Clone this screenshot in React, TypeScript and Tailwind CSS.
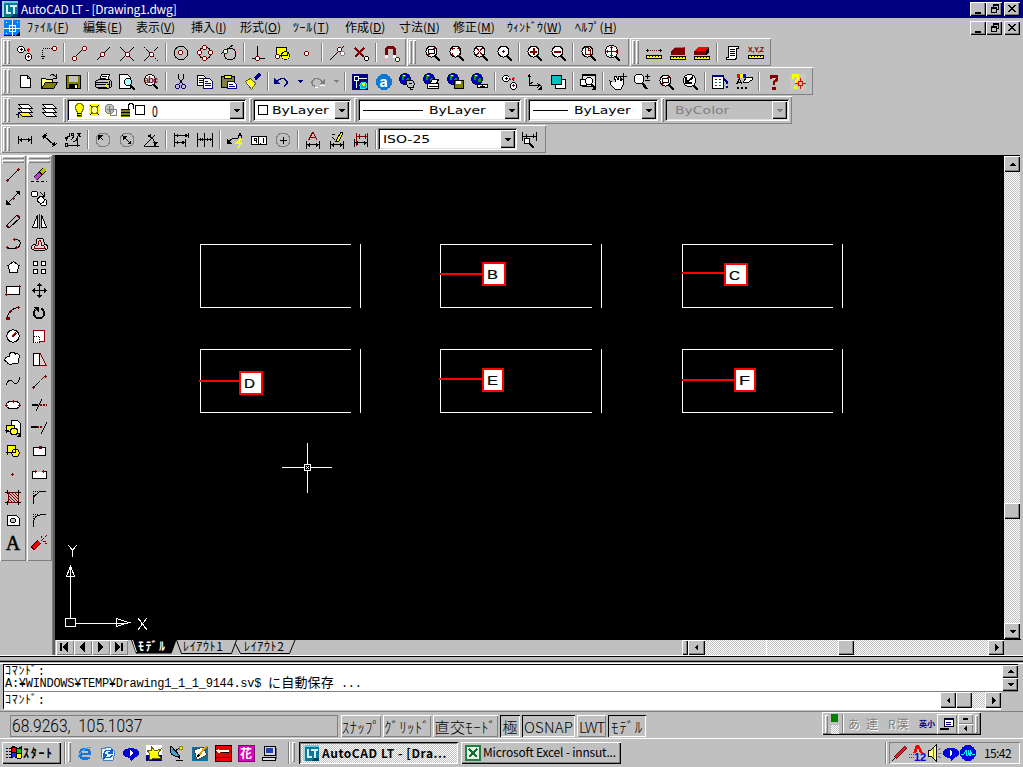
import type { ReactNode } from 'react';

const RED = '#800000';
const NAVY = '#000080';
const WHITE = '#fff';
const GRAY = '#808080';
const YELLOW = '#ffff00';

// --- Win95 style bevels ---
const raised = 'bg-[#c0c0c0] shadow-[inset_1px_1px_0_#fff,inset_-1px_-1px_0_#000,inset_-2px_-2px_0_#808080]';
const thinRaised = 'bg-[#c0c0c0] shadow-[inset_1px_1px_0_#fff,inset_-1px_-1px_0_#808080]';
const thinSunken = 'shadow-[inset_1px_1px_0_#808080,inset_-1px_-1px_0_#fff]';
const sunken = 'shadow-[inset_1px_1px_0_#808080,inset_-1px_-1px_0_#fff,inset_2px_2px_0_#000,inset_-2px_-2px_0_#dfdfdf]';
const dither = 'bg-[repeating-conic-gradient(#fff_0_25%,#c0c0c0_0_50%)] bg-[length:2px_2px]';

// --- Small drawing helpers ---
type PProps = { d: string; c?: string; w?: number; f?: string; dash?: string };
const P = ({ d, c = '#000', w = 1, f = 'none', dash }: PProps) => (
  <path d={d} stroke={c} strokeWidth={w} fill={f} strokeDasharray={dash} />
);
const F = ({ d, c = '#000' }: { d: string; c?: string }) => <path d={d} fill={c} />;
const N = ({ x, y, c = RED }: { x: number; y: number; c?: string }) => (
  <>
    <path d={`M${x - 1} ${y - 2}h3v1h1v3h-1v1h-3v-1h-1v-3h1z`} fill={c} />
    <rect x={x - 1} y={y - 1} width="3" height="3" fill={WHITE} />
  </>
);
const D = ({ x, y, c = RED }: { x: number; y: number; c?: string }) => (
  <path d={`M${x} ${y - 1}h1v1h1v1h-1v1h-1v-1h-1v-1h1z`} fill={c} />
);
const C = ({ x, y, r, c = '#000', f = 'none' }: { x: number; y: number; r: number; c?: string; f?: string }) => (
  <circle cx={x} cy={y} r={r} stroke={c} fill={f} />
);
const Lens = ({ children, r = 5.5 }: { children?: ReactNode; r?: number }) => (
  <>
    <P d="M13 14l5 5" w={2.4} />
    <C x={9.5} y={9.5} r={r} f={WHITE} />
    {children}
  </>
);
const Ruler = ({ y = 14 }: { y?: number }) => (
  <>
    <rect x="2" y={y} width="16" height="4" fill="#000" />
    <rect x="3" y={y + 1} width="14" height="2" fill={YELLOW} />
    <path d={`M4.5 ${y + 1.5}h12`} stroke="#000" strokeDasharray="1 2" />
  </>
);
const Globe = () => (
  <>
    <C x={7} y={8} r={5.5} c={NAVY} f="#0000c0" />
    <F d="M4 4h4v2h-2v3h-2zM9 7h2v4h-3v-2z" c="#00a000" />
    <F d="M5 4h2v1h-2z" c={WHITE} />
  </>
);
const Corner = () => <F d="M18 14v5h-5z" />;
const DimBar = ({ y }: { y: number }) => (
  <P d={`M3.5 ${y - 3}v8M16.5 ${y - 3}v8M4 ${y + 0.5}h12M6.5 ${y - 1.5}v4M5.5 ${y - 0.5}v2M13.5 ${y - 1.5}v4M14.5 ${y - 0.5}v2`} />
);

const icons: Record<string, ReactNode> = {
  // object snap
  track: <><P d="M9 8h5M13.5 8v5" dash="2 1" c={RED} /><C x={6} y={7.5} r={3.2} f={WHITE} /><C x={13.5} y={15} r={3.2} f={WHITE} /><D x={6} y={7} c="#000" /><D x={13} y={7} c="#f00" /><D x={13} y={14} c={RED} /></>,
  from: <><P d="M3.5 6.5h11M3.5 8v8" dash="1 1" /><P d="M2 14.5h4M3 16.5h2" /><N x={15} y={6} /></>,
  endpoint: <><P d="M5 16L15 6" /><N x={5} y={16} /><N x={15} y={6} /></>,
  midpoint: <><P d="M4 18L17 5" /><N x={9} y={12} /></>,
  intersect: <><P d="M3 5l14 14M3 19L17 5" /><N x={10} y={12} /></>,
  apparent: <><P d="M3 5l14 14" dash="2 1" /><P d="M3 19l5-5M13 9l4-4" /><N x={10} y={12} /></>,
  center: <><C x={10} y={11} r={6.7} /><N x={9} y={10} /></>,
  quadrant: <><C x={10} y={11} r={6} /><N x={9} y={5} /><N x={9} y={16} /><N x={4} y={10} /><N x={15} y={10} /></>,
  tangent: <><P d="M2 12L14 3" /><C x={11} y={12} r={6} /><N x={6} y={9} /></>,
  perp: <><P d="M8.500 4v12M3 16.500h13" /><N x={8} y={16} /></>,
  insert: <><P d="M3.5 5.5h10v8h-10z" f={YELLOW} /><C x={12.5} y={13.5} r={4} f={YELLOW} /><P d="M8 13.5h6v-4" /><N x={4} y={14} /></>,
  node: <N x={9} y={11} />,
  nearest: <><P d="M3 18L17 4" /><N x={12} y={7} /><N x={15} y={11} c={GRAY} /></>,
  none: <><P d="M4 6l9 9M13 6l-9 9" c={RED} w={2.4} /><N x={15} y={16} c="#000" /></>,
  magnet: <><P d="M5.5 15V8q0-3 4-3t4 3v7" c={RED} w={3} /><F d="M4 13h3v3h-3zM12 13h3v3h-3z" c={WHITE} /><N x={16} y={17} /></>,
  // zoom
  zwin: <Lens><P d="M6.5 7.5h6v4h-6z" /><D x={6} y={12} /><D x={12} y={6} /></Lens>,
  zdyn: <Lens><P d="M6.5 8v-1.500h2M11 6.500h2v2M13 11v2h-2M8 13h-2v-2" c={RED} /></Lens>,
  zscale: <Lens><P d="M7 6l5 7M12 6l-5 7M6 6.500h2M11 6.500h2M6 12.500h2M11 12.500h2" c={RED} /></Lens>,
  zcenter: <Lens><D x={9} y={9} /></Lens>,
  zin: <Lens><P d="M6 9.500h7M9.500 6v7" c={RED} w={2} /></Lens>,
  zout: <Lens><P d="M6 9.500h7" c={RED} w={2} /></Lens>,
  zall: <Lens><P d="M7.500 5.500h3l2 2v5h-5zM10 6v2h2" c={RED} /></Lens>,
  zext: <Lens r={6.2}><P d="M3 9.500h13M9.500 3v13M5 8v3M14 8v3M8 5.500h3M8 13.500h3" c={RED} /></Lens>,
  // inquiry
  dist: <><P d="M4 8.500h12" c={RED} dash="1 1" /><D x={3} y={8} c="#000" /><D x={16} y={8} c="#000" /><Ruler y={13} /></>,
  area: <><F d="M3 13V9l4-4h10v8z" c={RED} /><P d="M7 5.500h9" c={GRAY} /><Ruler /></>,
  mass: <><F d="M2 13V9l5-4h10v5l-3 3z" c={RED} /><F d="M2 9l5-4h10l-3 4z" c="#f00" /><F d="M14 9l3-4v6l-3 2z" /><Ruler /></>,
  list: <><P d="M6.500 4.500h10v2h-2v9l-1 2h-9v-2h2z" f={WHITE} /><P d="M8 7.500h5M8 9.500h5M8 11.500h5M8 13.500h5" /></>,
  id: <><text x="2" y="10" fontSize="7" fill={RED} textLength="16" fontFamily="Liberation Sans" fontWeight="bold">X,Y,Z</text><Ruler y={13} /></>,
  // standard
  new: <P d="M5.500 4.500h7l3 3v9h-10zM12.500 4.500v3h3" f={WHITE} />,
  open: <><P d="M2.500 17V7.500h4l1 1h6v3" f="#ffff80" /><P d="M2.500 17.500l4-6h12l-4 6z" f="#808000" /><P d="M11 5q3-3 6 1M17.500 3v4h-4" /></>,
  save: <><P d="M3.500 4.500h14v13h-14z" f="#808000" /><F d="M6 5h9v6h-9z" c="#c0c0c0" /><F d="M6 13h9v5h-9z" /><F d="M12 14h2v3h-2z" c={WHITE} /></>,
  print: <><P d="M6.500 9.500l2-6h8l-2 6z" f={WHITE} /><P d="M9 5.500h5M8 7.500h5" /><P d="M2.500 10.500l3-2h11l2 2v5l-3 2h-10l-3-2z" f="#c0c0c0" /><P d="M3 11.500h12M3 13.500h13M16 10v6M5 16.500h9" /><D x={13} y={14} c={YELLOW} /></>,
  preview: <><P d="M2.500 3.500h8l3 3v11h-11z" f={WHITE} /><C x={11} y={11} r={3.500} f="#b0ffff" /><P d="M13 14l5 5" w={2} /></>,
  spell: <><C x={9} y={9} r={5.500} f={WHITE} /><text x="3" y="12" fontSize="9" fontWeight="bold" fill={RED} textLength="14" fontFamily="Liberation Sans">abc</text><P d="M13 14l4 4" w={2.400} /></>,
  cut: <><P d="M7.500 3v4l5 7M12.500 3v4l-5 7" /><C x={6.500} y={15.500} r={2} c={NAVY} /><C x={12.500} y={15.500} r={2} c={NAVY} /></>,
  copy: <><P d="M2.500 4.500h6l3 3v7h-9z" f={WHITE} /><P d="M4 7.500h4M4 9.500h5M4 11.500h5" /><P d="M8.500 7.500h6l3 3v7h-9z" c={NAVY} f={WHITE} /><P d="M10 10.500h3M10 12.500h6M10 14.500h6" c={NAVY} /></>,
  paste: <><P d="M2.500 5.500h13v11h-13z" f="#808040" /><P d="M5.500 4.500h7v3h-7z" f={YELLOW} /><P d="M8.500 10.500h6l3 3v4h-9z" c={NAVY} f={WHITE} /><P d="M10 13.500h4M10 15.500h6" c={NAVY} /></>,
  brush: <><P d="M12 8l5-5" c={NAVY} w={3.500} /><P d="M7 8l6 5" w={2} c={GRAY} /><P d="M2.500 10.500l5-3 5 5-4 6z" c="#606000" f={YELLOW} /><P d="M5 10l5 5M4 12l4 4" c={WHITE} /></>,
  undo: <><F d="M3 7v6h6z" c={NAVY} /><P d="M6 10q6-5 10 0 1 4-3 5" c={NAVY} w={1.400} /></>,
  redo: <><F d="M18 7v6h-6z" c={GRAY} /><P d="M15 10q-6-5-10 0-1 4 3 5" c={GRAY} w={1.400} /><P d="M8 16.500h3M13 14h5" c={WHITE} /></>,
  darrow: <F d="M7 9h6l-3 3z" c={NAVY} />,
  darrowoff: <F d="M7 9h6l-3 3z" c={GRAY} />,
  today: <><F d="M2 3h16v16h-16z" c={NAVY} /><P d="M4.500 5.500h4v4h-4zM9 7.500h8M6.500 10v7" c={WHITE} /><C x={13.500} y={14.500} r={3.500} c="#0ff" f="#3a9" /><F d="M12 12h3v3h-2z" c={YELLOW} /></>,
  ap: <><circle cx="10" cy="11" r="8" fill="#0a78d8" /><text x="5.500" y="15.500" fontSize="14" fontWeight="bold" fill="#fff" fontFamily="Inter">a</text></>,
  meet: <><Globe /><P d="M8.500 9.500h6l2 3-1 4h-5l-2-3z" f="#c0c0c0" /><P d="M11 12.500h3M12 16v2.500h3" w={1} /></>,
  etrans: <><Globe /><P d="M7.500 12.500l3-4h6l-2 4zM5.500 12.500h11v5h-11z" f={WHITE} /><P d="M7 15.500h9" /></>,
  pubweb: <><Globe /><P d="M8.500 9.500h9v8h-9z" f="#808000" /><F d="M10 10h5v3h-5z" c={WHITE} /></>,
  hyper: <><Globe /><P d="M7.500 13.500h5v3h-5zM12.500 13.500h5v3h-5z" f={WHITE} /><P d="M10 15.500h5" /></>,
  ucs: <><P d="M5.500 4v10h9M4 6l1.500-2 1.500 2M5 14l4-3" /><P d="M13 12l3 2.500-3 2" /><Corner /></>,
  order: <><P d="M7.500 8.500h10v9h-10z" f={WHITE} /><P d="M3.500 4.500h10v9h-10z" f="#00c0c0" /></>,
  nview: <><P d="M4.500 3.500h13v12h-13zM4 4.500h14" f="#e0e0e0" /><P d="M2.500 8.500h6v6h-6z" f={WHITE} /><C x={11} y={10} r={3.800} f={WHITE} /><P d="M13 13l4 4" w={2} /><Corner /></>,
  pan: <><P d="M4 11l-2-1 1 4 4 4h6l2-4V9l-2-2v3l-1-5h-2v4l-2-4-2 1 2 5" f={WHITE} /><P d="M12 5.500h7M15.500 2v7" /></>,
  zrt: <><C x={7} y={8} r={5} f={WHITE} /><P d="M10 12l5 6" w={2.200} /><P d="M13 5.500h5M15.500 3v5M13 9.500h5" /></>,
  zprev: <Lens r={6.200}><P d="M6 6v6h6M6 12l7-6" w={2} /></Lens>,
  props: <><P d="M2.500 4.500h11v13h-11z" f={WHITE} /><P d="M2 4.500h12" c={NAVY} w={2} /><P d="M5 8.500h2M9 8.500h2M5 14.500h2" c={RED} /><P d="M5 11.500h2M9 11.500h2M9 14.500h2" c="#008040" /><P d="M14 8q3 1 3 5M17 15v2" c={NAVY} w={2} /></>,
  dcenter: <><F d="M3 3h3v4h-3z" c="#f00" /><F d="M6 3h3v4h-3z" c={YELLOW} /><F d="M9 3h3v4h-3z" c="#00f" /><P d="M9 11l4-5h5v3l-5 3z" f={WHITE} /><P d="M3 13l2.500-5L8 13M4 11.500h3" w={1.300} /><P d="M3 16.500h2M7 16.500h2M11 16.500h2" w={2} /></>,
  help: <><P d="M7 8V5.500h6V9l-3 2v3" c={RED} w={2.500} /><F d="M8 16h4v3h-4z" c={RED} /></>,
  help2: <><F d="M2 3h16v16h-16z" c="#c8c8c4" /><P d="M5 8V4.500h5V8l-2 2v3" c={YELLOW} w={2.500} /><F d="M6 15h3v3h-3z" c={YELLOW} /><P d="M10.500 10.500h4v4h-4zM7 12.500h4M14 12.500h4M12.500 7v4M12.500 14v4" c="#e00" /></>,
  // layers
  layerprev: <><P d="M3.500 4.500h10l4 4h-10z" f={WHITE} /><P d="M3.500 8.500h10l4 4h-10z" f={WHITE} /><P d="M3.500 12.500h10l4 4h-10z" f={YELLOW} /><P d="M3 13v5M1 14.500h3" /></>,
  layers: <><P d="M3.500 12.500h10l4 4h-10z" f={WHITE} /><P d="M3.500 8.500h10l4 4h-10z" f={WHITE} /><P d="M3.500 4.500h10l4 4h-10z" f={WHITE} /></>,
  // dimension
  dlin: <DimBar y={10} />,
  dali: <><P d="M3 8l5-4M13 18l5-4M5 7l10 9" /><F d="M4 6h4l-4 4zM16 12v4h-4z" /></>,
  dord: <><P d="M6.500 4v3q-3 1-3 3M11 6q-1 4-3 5M14.500 8v10M4 16.500h13M10 12.500q4 0 4-4" /><P d="M2 8.500l1.500 1.500L5 8.500M3.500 10v2M8.500 4.500h2v2h-2zM14.500 4l3 4M17.500 4l-3 4M2.500 14.500h2v3h-2z" /></>,
  drad: <><C x={10} y={11} r={7} c={GRAY} /><P d="M6 7l4 4" /><F d="M5 6h5l-5 5z" /></>,
  ddia: <><C x={10} y={11} r={7} c={GRAY} /><P d="M5 6l9 9" /><F d="M6 7h4l-4 4zM14 11v4h-4z" /></>,
  dang: <><P d="M3 17.500h15M3 17L14 6M8 7q6 2 6 10" /><F d="M6 7l4-2v4zM12 13h5l-2.500 4z" /></>,
  dbase: <><P d="M3.500 4v14M14.500 10v8M17.500 4v5M4 6.500h13M4 13.500h10" /><F d="M4 6.500l3-2v4zM17 6.500l-3-2v4zM4 13.500l3-2v4zM14 13.500l-3-2v4z" /></>,
  dcont: <><P d="M2.500 4v14M9.500 4v14M17.500 4v14M3 10.500h14M5 9v3M7 9v3M12 9v3M15 9v3" /></>,
  dlead: <><P d="M3 13l5-4h5" /><F d="M2 10v5h5z" /><P d="M13 9l2-5 2 5" /><P d="M16 10l-4 4h4l-3 5" c={YELLOW} w={1.600} /></>,
  dtol: <><P d="M2.500 7.500h15v8h-15zM9.500 7v8" f={WHITE} /><P d="M5 11.500h3M7 9v5M5 11l1.500-2M11.500 13.500v1M14.500 9v5" /></>,
  dcen: <><C x={10} y={11} r={7} c={GRAY} /><P d="M7 11.500h7M10.500 8v7" /></>,
  dedit: <><P d="M6 11l4-8 4 8M7 8.500h6" c={RED} w={1.300} /><DimBar y={15} /></>,
  dtedit: <><DimBar y={15} /><P d="M9 12l5-9 2 1-4 8z" f={YELLOW} /><P d="M5 8l3 3M5 5.500h3" /></>,
  dupd: <><P d="M5.500 4v13M16.500 4v13M5 7.500h12M8 5v5M14 5v5" c={RED} /><DimBar y={13} /></>,
  dstyle: <><P d="M3.500 3v9M17.500 3v9M4 7.500h13M7 5v4M14 5v4" /><P d="M9 13l6 6" w={2} /><C x={8} y={12} r={3} f={WHITE} /></>,
  // draw
  line: <><P d="M5 15L15 5" /><D x={4} y={15} /><D x={15} y={4} /></>,
  xline: <><P d="M4 16L16 4" w={1.400} /><F d="M3 17v-5l5 5zM17 3v5l-5-5z" /><D x={10} y={10} /></>,
  mline: <><P d="M3.500 14.500L14 4l3 3L6 17z" /><D x={4} y={15} /><D x={15} y={5} /></>,
  pline: <><P d="M10 5.500h4q4 1 3 5t-5 3.500H4" /><D x={11} y={5} /><D x={4} y={13} /><D x={13} y={13} /></>,
  polygon: <P d="M10.500 4.500l5.500 4-2 7H7l-2-7z" f={WHITE} />,
  rect: <><P d="M3.500 6.500h13v8h-13z" f={WHITE} /><D x={3} y={14} /><D x={16} y={6} /></>,
  arc: <><P d="M4 16Q5 6 16 4" /><D x={7} y={8} /><D x={15} y={4} /><F d="M3 14h4v3h-4z" c={RED} /></>,
  circle: <><C x={10} y={10} r={6.200} f={WHITE} /><P d="M9 11l4-4" c={RED} w={1.500} /></>,
  cloud: <P d="M6.500 7.500q-1-4 3-4 2 0 3 1.500 4-1 4 2.500 0 2-1.500 2.500 2 5-2 5-2 0-3-1-1 2-3.500 1.500-2-.5-2-2.500-3 0-2.500-3 .5-2.500 4.500-2.500" f={WHITE} />,
  spline: <P d="M3 13q3-8 7-3t7-5" />,
  ellipse: <><ellipse cx="10" cy="10" rx="7" ry="4" fill={WHITE} stroke="#000" /><D x={3} y={10} /><D x={16} y={10} /><D x={10} y={6} /></>,
  block: <><P d="M8.500 2.500h6l3 3v10h-9z" f={WHITE} /><P d="M3.500 7.500h8v6h-8z" f={YELLOW} /><C x={11} y={13.500} r={3.500} f={YELLOW} /><P d="M2 12.500h4M3.500 11v4" /><Corner /></>,
  mkblock: <><P d="M4.500 4.500h8v7h-8z" f={YELLOW} /><C x={12.500} y={12} r={3.700} f={YELLOW} /><P d="M8 11.500h4v-3M3 11.500h3M4.500 9v5" /></>,
  point: <D x={9} y={10} />,
  hatch: <><P d="M5 5.500h10v10H5z" c={RED} /><P d="M4.500 3v4M15.500 3v4M4.500 14v4M15.500 14v4M2 5.500h3M15 5.500h3M2 15.500h3M15 15.500h3" /><P d="M6 6l9 9M6 9l6 6M9 6l6 6M6 12l3 3M12 6l3 3" c={RED} /></>,
  region: <><P d="M4.500 5.500h9l3 3v7h-12z" f={WHITE} /><C x={10} y={10.500} r={2.500} f="#c0c0c0" /></>,
  text: <text x="10" y="16.500" fontSize="20" textAnchor="middle" stroke="#000" strokeWidth="0.5" fontFamily="Liberation Serif">A</text>,
  // modify
  erase: <><P d="M2 16.500h16" dash="3 2" /><P d="M6 14l9-9" w={5} /><P d="M6 14l5-5" c="#c040c0" w={3.400} /><P d="M12 8l4-4" c="#c0c000" w={3.400} /></>,
  mcopy: <><C x={5.500} y={6} r={3} f={WHITE} /><C x={14.500} y={14.500} r={3.200} f={WHITE} /><C x={12} y={12} r={3.200} f={WHITE} /><P d="M11 4l4 4M15.500 4v4h-4" /></>,
  mirror: <><P d="M8.500 4v12.500h-5z" f={WHITE} /><P d="M12.500 4v12.500h5z" f={WHITE} /><P d="M10.500 3v15" c={RED} /></>,
  offset: <><P d="M3 15q-2-4 4-5V8q0-4 4-4t4 4v2q5 1 3 5l-2 1H5z" f="#d8d8d8" /><P d="M5 14q0-2 4-3V8q2-3 3 0v3q4 1 4 3z" c={RED} /></>,
  array: <P d="M4.500 4.500h4v4h-4zM12.500 4.500h4v4h-4zM4.500 12.500h4v4h-4zM12.500 12.500h4v4h-4z" f={WHITE} />,
  move: <><P d="M3 10.500h15M10.500 3v15" w={1.400} /><F d="M10.500 3l3 3h-6zM10.500 18l3-3h-6zM3 10.500l3-3v6zM18 10.500l-3-3v6z" /></>,
  rotate: <><P d="M12 5.500a5.200 5.200 0 1 1-5.500 1" w={2} /><F d="M4 4h6v6z" /></>,
  scale: <><P d="M4.500 4.500h11v11h-11z" c={RED} f={WHITE} /><P d="M4.500 10.500h6v6h-6z" f={WHITE} dash="1 1" /></>,
  stretch: <><P d="M11 4l6 12h-6" c={RED} f="#e8d0d0" /><P d="M4.500 4.500h6v12h-6z" f={WHITE} /></>,
  lengthen: <><P d="M5 15l5-5" /><P d="M10 10l5-5" c={RED} dash="2 1" /><D x={4} y={15} /><D x={16} y={4} /></>,
  trim: <><P d="M3 10h6" w={2} /><P d="M11 10h7" c={RED} dash="2 1" w={2} /><P d="M7 16l6-12" /></>,
  extend: <><P d="M2 9h6" w={2} /><P d="M8 9h6" c={RED} dash="2 1" w={2} /><P d="M12 16l6-12" /></>,
  break1: <><P d="M4.500 6.500h12v8h-12z" f={WHITE} /><F d="M10 5h3v3h-3z" c={RED} /></>,
  break2: <><P d="M6 7.500H3.500v7h14v-7H15" f={WHITE} /><D x={6} y={7} /><D x={14} y={7} /></>,
  chamfer: <><P d="M4.500 17V10l6-5.500H17" /><P d="M4.500 9V4.500H10" dash="1 1" /></>,
  fillet: <><P d="M4.500 17v-4q0-8 9-8.500H17" /><P d="M4.500 9V4.500H10" dash="1 1" /></>,
  explode: <><P d="M3 16l7-7" w={5} /><P d="M4 15l6-6" c="#e00" w={3} /><P d="M12 8l3-3M14 8h3M12 5V3M16 4l2-2M16 10l2 1" c={RED} /></>,
};

const Icon = ({ name }: { name: string }) => (
  <svg width="20" height="20" viewBox="0 0 20 20" shapeRendering="crispEdges" className="shrink-0 overflow-visible">
    {icons[name]}
  </svg>
);

const Grip = () => (
  <div className="ml-[2px] mr-[3px] flex h-[24px] shrink-0 gap-px">
    <div className={`w-[3px] ${thinRaised}`} />
    <div className={`w-[3px] ${thinRaised}`} />
  </div>
);

const Sep = () => (
  <div className="flex w-[6px] shrink-0 justify-center">
    <div className="h-[19px] w-[2px] border-l border-[#808080] bg-white" />
  </div>
);

// '|' makes a separator, every other word is one button
const Buttons = ({ items }: { items: string }) => (
  <>
    {items.split(' ').map((name, i) =>
      name === '|' ? (
        <Sep key={i} />
      ) : (
        <div key={i} className="flex w-6 shrink-0 justify-center">
          <Icon name={name} />
        </div>
      ),
    )}
  </>
);

const Bar = ({ w, children }: { w: string; children: ReactNode }) => (
  <div className={`flex h-[28px] shrink-0 items-center ${thinRaised} ${w}`}>
    <Grip />
    {children}
  </div>
);

type Dir = 'up' | 'down' | 'left' | 'right';
const arrowPaths: Record<Dir, string> = {
  up: 'M1 6h7L4.500 2.500z',
  down: 'M1 3h7L4.500 6.500z',
  left: 'M6 1v7L2.500 4.500z',
  right: 'M3 1v7l3.500-3.500z',
};
const Arrow = ({ dir, color = '#000' }: { dir: Dir; color?: string }) => (
  <svg width="9" height="9" shapeRendering="crispEdges">
    <path d={arrowPaths[dir]} fill={color} />
  </svg>
);

const ScrollBtn = ({ dir, size }: { dir?: Dir; size: string }) => (
  <div className={`flex shrink-0 items-center justify-center ${raised} ${size}`}>{dir && <Arrow dir={dir} />}</div>
);

const Combo = ({ w, disabled, children }: { w: string; disabled?: boolean; children: ReactNode }) => (
  <div className={`flex h-[22px] shrink-0 items-center p-[2px] ${sunken} ${w} ${disabled ? 'bg-[#c0c0c0] text-[#808080]' : 'bg-white'}`}>
    <div className="flex h-full min-w-0 flex-1 items-center whitespace-nowrap pl-[3px] font-['DejaVu_Sans'] text-[11px] leading-none">{children}</div>
    <div className={`flex h-[18px] w-[15px] items-center justify-center ${raised}`}>
      <Arrow dir="down" color={disabled ? '#808080' : '#000'} />
    </div>
  </div>
);

// combo captions use a stretched face
const Wide = ({ children }: { children: ReactNode }) => (
  <span className="inline-block origin-left scale-x-[1.270]">{children}</span>
);

const DoubleSep = () => (
  <div className="mx-px flex h-[24px] shrink-0">
    <div className={`w-[3px] ${thinRaised}`} />
  </div>
);

const winIcons: Record<string, string> = {
  min: 'M4 10h6v2H4z',
  restore: 'M6 2h6v6h-2v3H4V5h2zM7 4v1h3v2h1V4zM5 7v3h4V7z',
  close: 'M3 3h2v1h1v1h2V4h1V3h2v1h-1v1H9v1H8v1h1v1h1v1h1v1H9V9H8V8H6v1H5v1H3V9h1V8h1V7h1V6H5V5H4V4H3z',
};
const WinButtons = () => (
  <div className="mr-[3px] flex">
    {['min', 'restore', 'close'].map((k) => (
      <div key={k} className={`flex h-[14px] w-4 justify-center ${raised} ${k === 'close' ? 'ml-[2px]' : ''}`}>
        <svg width="15" height="14" shapeRendering="crispEdges">
          <path d={winIcons[k]} fillRule="evenodd" />
        </svg>
      </div>
    ))}
  </div>
);

const AppLogo = () => (
  <svg width="16" height="16" shapeRendering="crispEdges" className="shrink-0">
    <rect width="16" height="16" fill="#0a7a9a" />
    <path d="M0 0h16v2H0z" fill="#70c8d8" />
    <path d="M0 0h2v16H0z" fill="#a0d8e0" />
    <path d="M4 4h2v7h3v2H4zM8 4h7v2h-2.500v7h-2V6H8z" fill="#d8f0f4" />
    <path d="M12 13h4v3h-8z" fill="#004060" />
  </svg>
);

const menus = [
  { label: 'ﾌｧｲﾙ', key: 'F', w: 'w-[56px] tracking-[0.500px]' },
  { label: '編集', key: 'E', w: 'w-[53px]' },
  { label: '表示', key: 'V', w: 'w-[55px]' },
  { label: '挿入', key: 'I', w: 'w-[49px]' },
  { label: '形式', key: 'O', w: 'w-[53px]' },
  { label: 'ﾂｰﾙ', key: 'T', w: 'w-[52px] tracking-[0.600px]' },
  { label: '作成', key: 'D', w: 'w-[54px]' },
  { label: '寸法', key: 'N', w: 'w-[54px]' },
  { label: '修正', key: 'M', w: 'w-[54px]' },
  { label: 'ｳｨﾝﾄﾞｳ', key: 'W', w: 'w-[68px]' },
  { label: 'ﾍﾙﾌﾟ', key: 'H', w: 'w-[60px] tracking-[0.200px]' },
];

const drawTools = 'line xline mline pline polygon rect arc circle cloud spline ellipse block mkblock point hatch region text'.split(' ');
const modifyTools = 'erase mcopy mirror offset array move rotate scale stretch lengthen trim extend break1 break2 chamfer fillet explode'.split(' ');

const SideBar = ({ tools }: { tools: string[] }) => (
  <div className={`flex h-[406px] w-[26px] flex-col items-center pt-px ${thinRaised}`}>
    <div className={`h-[3px] w-[22px] shrink-0 ${thinRaised}`} />
    <div className={`mt-px h-[3px] w-[22px] shrink-0 ${thinRaised}`} />
    {tools.map((t) => (
      <div key={t} className="flex h-[23.050px] shrink-0 items-center">
        <Icon name={t} />
      </div>
    ))}
  </div>
);

const frames = [
  [200, 244, 151, 160], [440, 244, 152, 161], [682, 244, 151, 160],
  [200, 349, 151, 160], [440, 349, 152, 161], [682, 349, 151, 160],
];
const tags = [
  { t: 'B', from: 440, y: 274, x: 482, top: 262, w: 24, h: 24 },
  { t: 'C', from: 682, y: 273, x: 724, top: 263, w: 24, h: 23 },
  { t: 'D', from: 199, y: 381, x: 239, top: 371, w: 24, h: 24 },
  { t: 'E', from: 439, y: 379, x: 482, top: 368, w: 22, h: 24 },
  { t: 'F', from: 682, y: 380, x: 734, top: 368, w: 22, h: 24 },
];

// model space, drawn in window coordinates
const ModelSpace = () => (
  <svg width="949" height="484" viewBox="55 155 949 484" shapeRendering="crispEdges" className="shrink-0 bg-black">
    {frames.map(([x, y, w, side]) => (
      <path key={`${x}-${y}`} d={`M${x + w} ${y + 0.5}H${x + 0.5}v63H${x + w}M${x + side + 0.5} ${y}v64`} stroke="#fff" fill="none" />
    ))}
    {tags.map((g) => (
      <g key={g.t}>
        <path d={`M${g.from} ${g.y}H${g.x}`} stroke="#f00" strokeWidth="2" />
        <rect x={g.x + 1} y={g.top + 1} width={g.w - 2} height={g.h - 2} fill="#fff" stroke="#f00" strokeWidth="2" />
        <text x={g.x + 5} y={g.top + 16.5} fontSize="13.5" stroke="#000" strokeWidth="0.2" textLength="11" lengthAdjust="spacingAndGlyphs" fontFamily="Liberation Sans">{g.t}</text>
      </g>
    ))}
    <path d="M282 467.500h22M311 467.500h21M307.500 443v21M307.500 471v22M304.500 464.500h6v6h-6z" stroke="#fff" fill="none" />
    <path d="M306 466h1v1h-1zM308 466h1v1h-1zM307 467h1v1h-1zM306 468h1v1h-1zM308 468h1v1h-1z" fill="#fff" />
    <path d="M70.500 567v51M66.500 576.500L70.500 566l4 10.500zM65.500 618.500h10v8h-10zM76 623.500h40M116.500 618.500L129 622.500l-12.500 4zM116 623h12" stroke="#fff" fill="none" />
    <path d="M68 545l4.500 5L77 545M72.500 550v7M138 618l9 12M147 618l-9 12" stroke="#fff" fill="none" />
  </svg>
);

const navPaths = [
  'M4 4h2v8H4zM12 3v10L6.500 8z',
  'M11 3v10L5.500 8z',
  'M6 3v10l5.500-5z',
  'M5 3v10l5.500-5zM11 4h2v8h-2z',
];

const Tabs = () => (
  <div className="relative h-[15px] w-[170px]">
    <svg width="170" height="15" className="absolute left-0 top-0">
      <path d="M0 0h45.500l-5 13.500H5z" fill="#000" />
      <path d="M1.500 0l4 12" stroke="#fff" fill="none" />
      <path d="M45.500 0l5 13.500h50L105.500 0M104.500 4l5 9.500h49L164 0" stroke="#000" fill="none" />
    </svg>
    <div className="absolute inset-x-0 -top-[2px] flex h-[15px] items-center whitespace-nowrap text-[12px] leading-none tracking-[0.650px]">
      <span className="w-[52px] pl-[7px] font-bold tracking-[1.500px] text-white">ﾓﾃﾞﾙ</span>
      <span className="w-[61px]">ﾚｲｱｳﾄ1</span>
      <span>ﾚｲｱｳﾄ2</span>
    </div>
  </div>
);

const statusButtons = [
  { t: 'ｽﾅｯﾌﾟ', w: 'w-[40px]', s: 'tracking-[0.300px]', on: false },
  { t: 'ｸﾞﾘｯﾄﾞ', w: 'w-[48px]', s: 'tracking-[0.200px]', on: false },
  { t: '直交ﾓｰﾄﾞ', w: 'w-[65px]', s: 'tracking-[0.400px]', on: false },
  { t: '極', w: 'w-[20px]', s: '', on: true },
  { t: 'OSNAP', w: 'w-[53px]', s: 'tracking-[0.200px]', on: true },
  { t: 'LWT', w: 'w-[29px]', s: 'tracking-[-1.200px]', on: false },
  { t: 'ﾓﾃﾞﾙ', w: 'w-[38px]', s: 'tracking-[0.700px]', on: true },
];

const quickLaunch: ReactNode[] = [
  <><circle cx="8" cy="9" r="5" fill="none" stroke="#1874d8" strokeWidth="3" /><path d="M4 9h9" stroke="#1874d8" strokeWidth="2" /><path d="M1 13Q3 4 14 2" stroke="#48a8e8" fill="none" /><path d="M11 10h5v2h-5z" fill="#c0c0c0" /></>,
  <><path d="M1 4l9-2 5 5-2 8-9 1-3-5z" fill="#e8f4ff" stroke="#4080c0" /><path d="M4 9q0-5 7-3M12 4v4H8M12 10q-1 4-7 2M4 14v-4h3" stroke="#1060c0" strokeWidth="1.500" fill="none" /></>,
  <><ellipse cx="8" cy="8" rx="8" ry="5" fill="#0000d8" /><path d="M7 12h5l-4 5z" fill="#0000d8" /><path d="M7 5l4 3-4 3z" fill="#fff" /></>,
  <><rect width="16" height="16" fill="#fff" /><path d="M0 10h16v6H0z" fill="#000080" /><path d="M5 1l4 5 6-2-3 5 3 5-6-1-6 2 1-6-3-4h4z" fill="#ffff00" stroke="#606000" /></>,
  <><path d="M2 1l9 10q-7 1-9-3t0-7z" fill="#40a0d0" stroke="#000" /><path d="M6 6l6-4M9 11l2 3M7 15h7" stroke="#000" /><circle cx="12" cy="3" r="2" fill="#ff0" stroke="#880" /></>,
  <><rect y="2" width="16" height="14" fill="#1070a0" /><path d="M2 5l9-3 4 8-10 5z" fill="#fffbe8" stroke="#444" /><path d="M6 11l9-10" stroke="#d8a000" strokeWidth="2" /><path d="M5 12l2-2" stroke="#000" strokeWidth="2" /></>,
  <><rect width="16" height="16" fill="#e80000" stroke="#000" /><path d="M1 5l3-1v1h10v2H5v1H3z" fill="#fff" /><path d="M6 7.500h8" stroke="#000" /><path d="M1 12.500h14" stroke="#600" /></>,
  <><rect width="16" height="16" fill="#e000c0" stroke="#800070" /><text x="2" y="13" fontSize="12" fontWeight="bold" fill="#fff" fontFamily="Noto Sans CJK JP">花</text></>,
  <><path d="M3 1h11v9H3z" fill="#d8d8d8" stroke="#000" /><path d="M5 3h7v5H5z" fill="#2040b0" /><path d="M1 12h13v3H1z" fill="#e0e0e0" stroke="#000" /><path d="M15 3v11" stroke="#606080" /></>,
];

const trayIcons: ReactNode[] = [
  <><path d="M3 13L14 2" stroke="#600" strokeWidth="4" /><path d="M3 13L14 2" stroke="#e02030" strokeWidth="2.400" /><path d="M0 16l3-4 1 1z" fill="#000" /></>,
  <><path d="M4 8l3-8h3l4 8h-3l-2-5-2 5z" fill="#f00" /><path d="M0 9.500h6M0 12.500h6" stroke="#f00" strokeDasharray="1 1" /><text x="5" y="16" fontSize="11" fontWeight="bold" fill="#0000e0" fontFamily="Liberation Sans" textLength="12">12</text></>,
  <><path d="M2 5h3l5-5v16l-5-5H2z" fill="#ffff80" stroke="#000" /><path d="M7 3v10" stroke="#808000" /><path d="M12 5l3-2M12 8h4M12 11l3 2" stroke="#808080" /></>,
  <><ellipse cx="8" cy="8" rx="8" ry="5.500" fill="#0000e8" /><path d="M7 12h5l-4 4z" fill="#0000e8" /><path d="M7 5q4 3 0 6z" fill="#fff" stroke="#fff" /></>,
  <><circle cx="8" cy="8" r="8" fill="#0000e8" /><path d="M1 9h3l2-4v6l2-1V5l2 6V5l2 4h3" stroke="#0ff" fill="none" /></>,
];

const Small = ({ children }: { children: ReactNode }) => (
  <svg width="16" height="16" viewBox="0 0 16 16" shapeRendering="crispEdges" className="shrink-0 overflow-visible">
    {children}
  </svg>
);

const TaskGrip = () => (
  <div className="flex h-[22px] gap-[2px]">
    <div className="w-[2px] border-l border-[#808080] bg-white" />
    <div className={`h-[20px] w-[3px] ${thinRaised}`} />
  </div>
);

export default function App() {
  return (
    <div className="relative flex h-[767px] w-[1023px] flex-col overflow-hidden bg-[#c0c0c0] font-['Noto_Sans_CJK_JP',sans-serif] text-[12px] leading-none text-black">
      {/* title bar */}
      <div className="flex h-[18px] shrink-0 items-center justify-between bg-[#000080] pl-[2px] text-white">
        <div className="flex items-center gap-[3px]">
          <AppLogo />
          <span className="text-[12px] tracking-[-0.240px]">AutoCAD LT - [Drawing1.dwg]</span>
        </div>
        <WinButtons />
      </div>

      {/* menu bar */}
      <div className="flex h-[20px] shrink-0 items-center justify-between pl-1">
        <div className="flex items-center">
          <svg width="16" height="16" shapeRendering="crispEdges" className="mr-[7px]">
            <path d="M0 0h16v12l-4 4H0z" fill="#0080ff" />
            <path d="M16 11v5h-5zM0 15h11v1H0z" fill="#000" />
            <path d="M0 8.500h16M8.500 0v16M5.500 5.500h6v6h-6z" stroke="#fff" strokeWidth="1" fill="none" />
            <path d="M2 2h1M13 2h1M2 13h1" stroke="#fff" />
          </svg>
          <div className="flex pb-[2px]">
            {menus.map((m) => (
              <span key={m.key} className={`whitespace-nowrap ${m.w}`}>
                {m.label}(<span className="underline underline-offset-1">{m.key}</span>)
              </span>
            ))}
          </div>
        </div>
        <WinButtons />
      </div>

      {/* toolbars */}
      <div className="flex h-[117px] shrink-0 flex-col gap-px">
        <div className="flex gap-px pl-px">
          <Bar w="w-[405px]">
            <Buttons items="track from | endpoint midpoint intersect apparent | center quadrant tangent | perp insert node | nearest none | magnet" />
          </Bar>
          <Bar w="w-[222px]">
            <div className="w-px" />
            <Buttons items="zwin zdyn zscale zcenter | zin zout | zall zext" />
          </Bar>
          <Bar w="w-[141px]">
            <Buttons items="dist area mass | list id" />
          </Bar>
        </div>
        <div className="flex pl-px">
          <Bar w="w-[812px]">
            <Buttons items="new open save | print preview spell | cut copy paste brush |" />
            <div className="flex w-[71px] shrink-0">
              <div className="w-[22px]"><Icon name="undo" /></div>
              <div className="flex w-[14px] justify-center"><Icon name="darrow" /></div>
              <div className="w-[22px]"><Icon name="redo" /></div>
              <div className="flex w-[13px] justify-center"><Icon name="darrowoff" /></div>
            </div>
            <Buttons items="| today ap meet etrans pubweb hyper | track ucs order | nview | pan zrt zwin zprev | props dcenter | help help2" />
          </Bar>
        </div>
        <div className="flex pl-px">
          <Bar w="w-[791px]">
            <Buttons items="layerprev layers" />
            <div className="w-px" />
            <DoubleSep />
            <Combo w="w-[179px]">
              <svg width="70" height="18" shapeRendering="crispEdges" className="shrink-0">
                <path d="M3 4h1V3h1V2h4v1h1v1h1v4h-1v2H9v5H5v-5H4V8H3z" fill="#ff0" stroke="#808000" />
                <path d="M5 12.500h4M5 14.500h4" stroke="#000" />
                <rect x="17" y="3" width="11" height="12" fill="#ff0" />
                <circle cx="22.500" cy="9" r="3.500" fill="#ffffa0" stroke="#808000" />
                <path d="M18 4l2 2M27 4l-2 2M18 14l2-2M27 14l-2-2" stroke="#000" />
                <circle cx="37.500" cy="8" r="4.500" fill="#c0c0c0" stroke="#808080" />
                <path d="M35 8h5M37.500 5v6M38.500 8.500h6v6h-6z" stroke="#808080" fill="none" />
                <path d="M49 8h9v8h-9z" fill="#808000" />
                <path d="M49 8.500h9M49 11.500h9M49 14.500h9M56.500 8V4.500q0-2 2.500-2t2.500 2V8" stroke="#000" fill="none" strokeWidth="1.400" />
              </svg>
              <svg width="10" height="10" className="-ml-[7px] shrink-0"><rect x=".5" y=".5" width="9" height="9" fill="none" stroke="#000" /></svg>
              <span className="ml-[6px] scale-x-75 scale-y-110 font-['Noto_Sans_CJK_JP'] text-[14px]">0</span>
            </Combo>
            <div className="w-[2px]" />
            <DoubleSep />
            <Combo w="w-[98px]">
              <svg width="10" height="10" className="shrink-0"><rect x=".5" y=".5" width="9" height="9" fill="none" stroke="#000" /></svg>
              <span className="w-1" />
              <Wide>ByLayer</Wide>
            </Combo>
            <div className="w-[2px]" />
            <DoubleSep />
            <Combo w="w-[163px]">
              <div className="mr-[6px] h-px w-[60px] bg-black" />
              <Wide>ByLayer</Wide>
            </Combo>
            <div className="w-[2px]" />
            <DoubleSep />
            <Combo w="w-[130px]">
              <div className="mr-[6px] h-px w-[35px] bg-black" />
              <Wide>ByLayer</Wide>
            </Combo>
            <div className="w-[2px]" />
            <DoubleSep />
            <Combo w="w-[124px]" disabled>
              <span className="w-[5px]" />
              <Wide>ByColor</Wide>
            </Combo>
          </Bar>
        </div>
        <div className="flex pl-px">
          <Bar w="w-[545px]">
            <Buttons items="dlin dali dord | drad ddia dang | dbase dcont | dlead dtol dcen | dedit dtedit dupd |" />
            <div className="-ml-px">
              <Combo w="w-[139px]">
                <Wide>ISO-25</Wide>
              </Combo>
            </div>
            <Buttons items="dstyle" />
          </Bar>
        </div>
      </div>

      {/* drawing window */}
      <div className="flex h-[500px] shrink-0">
        <div className="flex w-[53px] gap-px border-r border-[#808080]">
          <SideBar tools={drawTools} />
          <SideBar tools={modifyTools} />
        </div>
        <div className="w-[2px] shrink-0 bg-[#606060]" />
        <div className="flex w-[966px] flex-col">
          <div className="flex h-[484px]">
            <ModelSpace />
            <div className={`flex w-4 flex-col border-t border-black ${dither}`}>
              <ScrollBtn dir="up" size="h-4 w-4" />
              <div className="h-[331px]" />
              <ScrollBtn size="h-4 w-4" />
              <div className="h-[104px]" />
              <ScrollBtn dir="down" size="h-4 w-4" />
            </div>
          </div>
          <div className="flex h-4 border-t border-black">
            <div className="flex w-[74px] pl-px">
              {navPaths.map((d) => (
                <div key={d} className={`h-[15px] w-[18px] ${thinRaised}`}>
                  <svg width="18" height="15" viewBox="0 1 18 15" shapeRendering="crispEdges"><path d={d} /></svg>
                </div>
              ))}
            </div>
            <div className="w-[2px]" />
            <Tabs />
            <div className="w-[381px]" />
            <div className={`h-[15px] w-[6px] ${raised}`} />
            <div className={`flex h-[15px] flex-1 ${dither}`}>
              <ScrollBtn dir="left" size="h-[15px] w-[17px]" />
              <div className="h-full w-[61px]" />
              <div className="h-full w-px bg-white" />
              <div className="h-full w-[71px]" />
              <ScrollBtn size="h-[15px] w-4" />
              <div className="flex-1" />
              <ScrollBtn dir="right" size="h-[15px] w-4" />
            </div>
            <div className="w-[17px] bg-[#c0c0c0]" />
          </div>
        </div>
      </div>
      <div className="h-[9px] shrink-0 border-y border-white pt-0">
        <div className="h-[6px] border-y border-black shadow-[inset_0_1px_0_#c0c0c0,inset_0_-1px_0_#808080]" />
      </div>

      {/* command window */}
      <div className="flex h-[46px] shrink-0 flex-col pl-[3px] font-['Liberation_Mono','Noto_Sans_CJK_JP',monospace]">
        <div className="flex h-[28px] w-[1015px] border-b border-l border-t border-b-[#808080] border-l-black border-t-black bg-white">
          <div className="relative z-10 flex flex-1 flex-col whitespace-pre pl-px pt-px text-[12px] leading-[12px]">
            <div className="h-3 tracking-[0.700px]">ｺﾏﾝﾄﾞ:</div>
            <div className="flex h-3 tracking-[-0.280px]">
              <span>A:¥WINDOWS¥TEMP¥Drawing1_1_1_9144.sv$ </span>
              <span className="text-[13px] tracking-[0.200px]">に自動保存</span>
              <span> ...</span>
            </div>
          </div>
          <div className="flex flex-col">
            <ScrollBtn dir="up" size="h-[13px] w-4" />
            <ScrollBtn dir="down" size="h-[13px] w-4" />
          </div>
        </div>
        <div className="flex h-[18px] w-[998px] border-b-2 border-l border-b-white border-l-black">
          <div className="w-[936px] bg-white pl-px pt-[3px] leading-[13px] tracking-[0.700px]">ｺﾏﾝﾄﾞ:</div>
          <div className={`flex flex-1 ${dither}`}>
            <ScrollBtn dir="left" size="h-4 w-4" />
            <ScrollBtn size="h-4 w-4" />
            <div className="flex-1" />
            <ScrollBtn dir="right" size="h-4 w-4" />
          </div>
        </div>
      </div>

      {/* status bar */}
      <div className="mt-px flex h-[27px] shrink-0 gap-[2px] border-t border-[#808080] pl-[10px] pt-[3px]">
        <div className="mr-px flex h-[22px] w-[328px] items-center border border-[#808080] pl-[1px] pt-[2px] font-['Roboto',sans-serif]">
          <span className="origin-left scale-x-[0.890] whitespace-pre text-[17.500px] font-light">68.9263,  105.1037</span>
        </div>
        {statusButtons.map((b) => (
          <div key={b.t} className={`flex h-[22px] items-center justify-center whitespace-nowrap text-[15px] font-light ${b.w} ${b.s} ${b.on ? 'shadow-[inset_1px_1px_0_#000,inset_-1px_-1px_0_#fff]' : thinRaised}`}>
            {b.t}
          </div>
        ))}
      </div>

      {/* task bar */}
      <div className="flex h-[29px] shrink-0 border-t border-white pt-[3px]">
        <div className={`ml-[2px] mr-[3px] flex h-[22px] w-[59px] items-center gap-px whitespace-nowrap pl-1 text-[12px] font-bold tracking-[1.700px] ${raised}`}>
          <Small>
            <path d="M0 3h5M0 6h5M0 9h5M0 12h5" stroke="#000" strokeDasharray="2 1" />
            <path d="M5 2q3-2 5 0t6-1v12q-3 2-6 0t-5 1z" fill="#000" />
            <path d="M6 3q2-1 4 0v4q-2-1-4 0z" fill="#f00" />
            <path d="M11 4q2 1 4 0v4q-2 1-4 0z" fill="#0c0" />
            <path d="M6 8q2-1 4 0v4q-2-1-4 0z" fill="#22f" />
            <path d="M11 9q2 1 4 0v4q-2 1-4 0z" fill="#ff0" />
          </Small>
          ｽﾀｰﾄ
        </div>
        <TaskGrip />
        <div className="flex w-[217px] items-center gap-[7px] pb-[3px] pl-[6px]">
          {quickLaunch.map((q, i) => (
            <Small key={i}>{q}</Small>
          ))}
        </div>
        <TaskGrip />
        <div className={`ml-[4px] flex h-[22px] w-[159px] items-center gap-[3px] pl-1 font-bold ${dither} shadow-[inset_1px_1px_0_#000,inset_-1px_-1px_0_#fff,inset_2px_2px_0_#808080]`}>
          <AppLogo />
          <span className="whitespace-nowrap tracking-[0.550px]">AutoCAD LT - [Dra...</span>
        </div>
        <div className={`ml-[3px] flex h-[22px] w-[160px] items-center gap-[2px] pl-1 ${raised}`}>
          <Small>
            <rect width="16" height="16" fill="#208040" />
            <path d="M2 2h12v12H2z" fill="#e8f4e8" />
            <path d="M4 4l8 8M12 4l-8 8" stroke="#107030" strokeWidth="2.500" />
          </Small>
          <span className="-mt-[2px] whitespace-nowrap tracking-[-0.200px]">Microsoft Excel - innsut...</span>
        </div>
        <div className="flex-1" />
        <div className="mr-[2px] h-[22px] w-[2px] border-l border-[#808080] bg-white" />
        <div className={`mr-[3px] flex h-[22px] w-[131px] items-center gap-[1px] pl-[3px] ${thinSunken}`}>
          {trayIcons.map((t, i) => (
            <Small key={i}>{t}</Small>
          ))}
          <span className="ml-[7px] tracking-[-0.600px]">15:42</span>
        </div>
      </div>

      {/* floating IME bar */}
      <div className={`absolute left-[822px] top-[712px] flex h-[23px] w-[159px] items-center px-[3px] ${raised}`}>
        <div className={`h-[18px] w-[3px] ${thinRaised}`} />
        <div className="ml-[3px] flex h-[20px] w-[8px] flex-col">
          <div className="h-2 w-[7px] bg-[#008000]" />
          <div className={`mt-[3px] h-[9px] w-2 ${dither}`} />
        </div>
        <div className="ml-[3px] mr-1 h-[19px] w-[2px] border-l border-[#808080] bg-white" />
        <span className="w-[18px] text-[12px] text-[#808080] [text-shadow:1px_1px_0_#fff]">あ</span>
        <span className="w-[22px] text-[12px] text-[#808080] [text-shadow:1px_1px_0_#fff]">連</span>
        <span className="w-[31px] whitespace-nowrap text-[12px] tracking-[1px] text-[#808080] [text-shadow:1px_1px_0_#fff]">R漢</span>
        <span className="w-[18px] whitespace-nowrap text-[8px] font-bold text-[#000080]">英小</span>
        <div className={`flex h-[20px] w-[20px] items-center justify-center ${thinRaised}`}>
          <svg width="14" height="14" shapeRendering="crispEdges">
            <path d="M4.500 1.500h9v8h-9z" fill="#fff" stroke="#000" />
            <path d="M4 2h9M6 5.500h5M6 7.500h5" stroke="#000080" />
            <path d="M0 12h9" stroke="#000" strokeWidth="2" />
          </svg>
        </div>
        <div className="ml-px flex w-[15px] flex-col">
          <div className={`flex h-[10px] items-center justify-center ${thinRaised}`}><div className="h-[2px] w-[5px] bg-black" /></div>
          <div className={`flex h-[10px] items-center justify-center ${thinRaised}`}><Arrow dir="left" /></div>
        </div>
        <div className={`ml-[2px] h-[18px] w-[3px] ${thinRaised}`} />
      </div>
    </div>
  );
}
